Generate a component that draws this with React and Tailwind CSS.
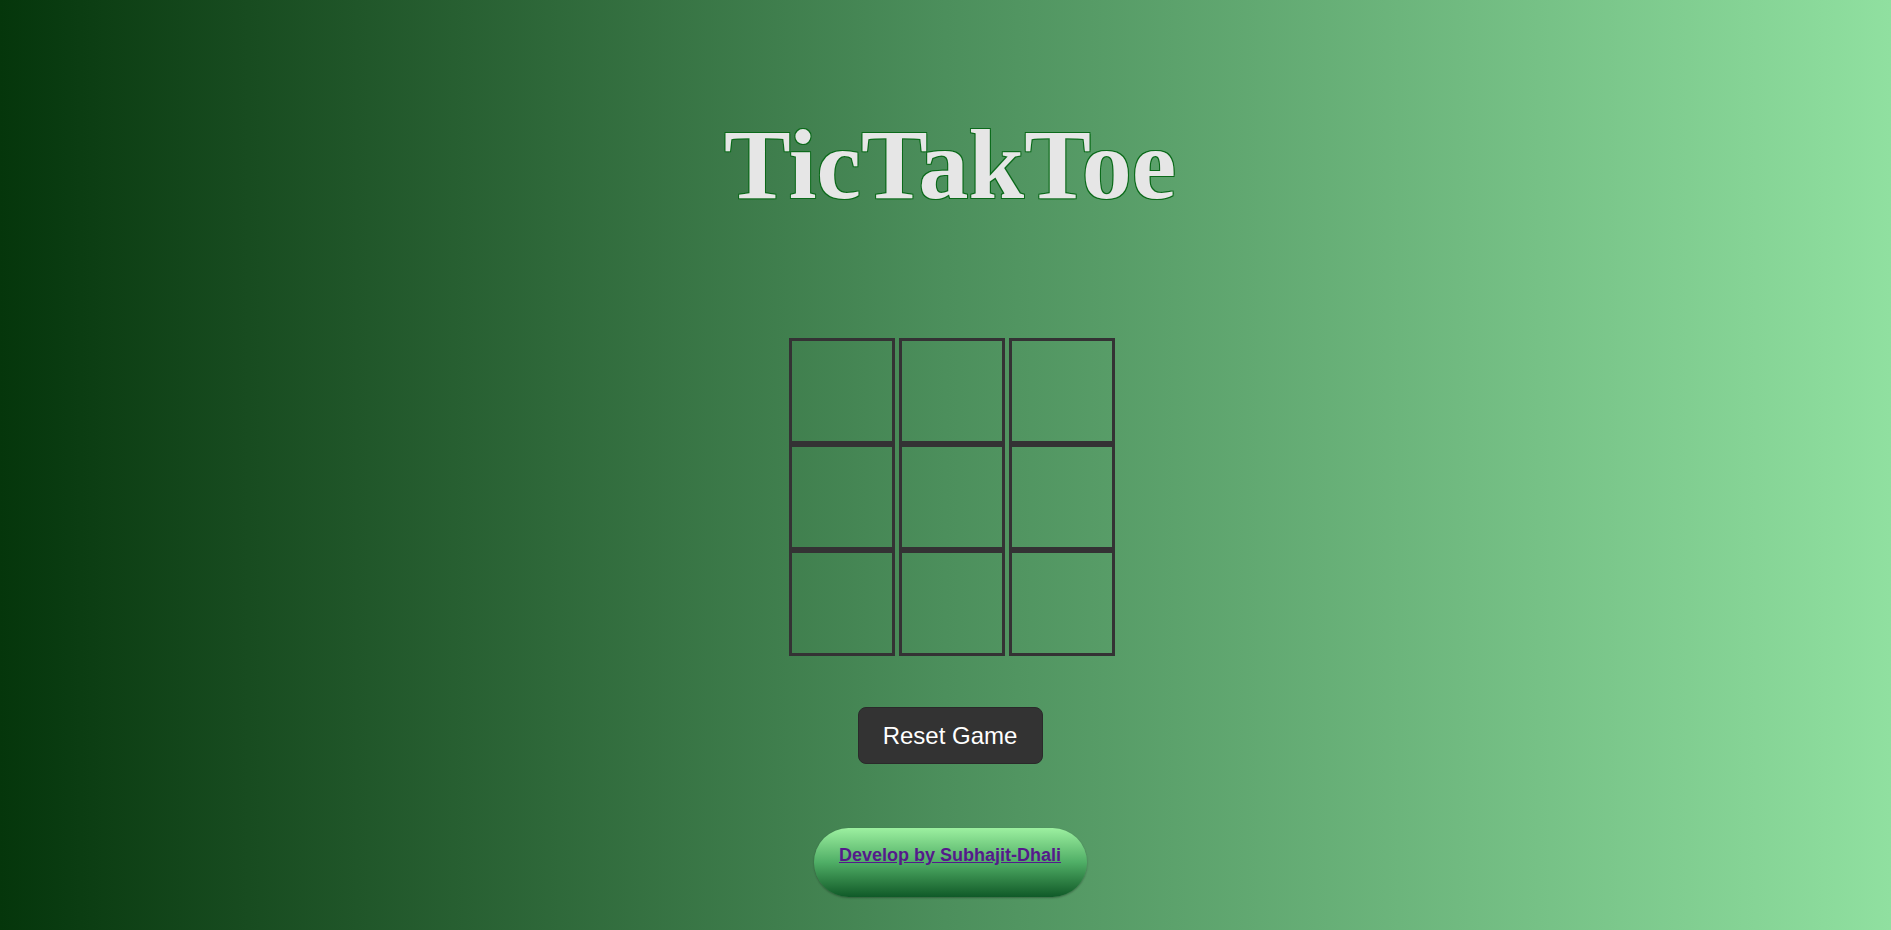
import React, { useState } from 'react';

const App = () => {
    const [board, setBoard] = useState(Array(9).fill(''));
    const [turn, setTurn] = useState('X');

    const handleClick = (i) => {
        if (board[i]) return;
        const next = [...board];
        next[i] = turn;
        setBoard(next);
        setTurn(turn === 'X' ? 'O' : 'X');
    };

    const resetGame = () => {
        setBoard(Array(9).fill(''));
        setTurn('X');
    };

    const rows = [0, 1, 2];

    return (
        <div className="h-[930px] w-full overflow-hidden flex flex-col items-center pl-[9px] bg-gradient-to-r from-[#05360b] via-[#4c8f5c] to-[#90e0a0]">
            <h1 className="mt-[115px] text-[100px] leading-none font-bold text-[#e6e6e6] font-['Liberation_Serif','Times_New_Roman',serif] [text-shadow:1px_1px_0_#0b6a1a,-1px_-1px_0_#0b6a1a,1px_-1px_0_#0b6a1a,-1px_1px_0_#0b6a1a]">
                TicTakToe
            </h1>

            <div className="mt-[123px] ml-[4px] flex flex-col">
                {rows.map((r) => (
                    <div key={r} className="flex gap-[4px]">
                        {rows.map((c) => {
                            const i = r * 3 + c;
                            return (
                                <button
                                    key={c}
                                    type="button"
                                    onClick={() => handleClick(i)}
                                    className="w-[106px] h-[106px] border-[3px] border-[#343234] bg-transparent text-[64px] text-[#333] font-['Liberation_Sans',Arial,sans-serif]"
                                >
                                    {board[i]}
                                </button>
                            );
                        })}
                    </div>
                ))}
            </div>

            <button
                type="button"
                onClick={resetGame}
                className="mt-[51px] w-[185px] h-[57px] rounded-[8px] bg-[#333333] border border-[#2a2a2a] text-white text-[24px] font-['Liberation_Sans',Arial,sans-serif]"
            >
                Reset Game
            </button>

            <div className="mt-[64px] w-[273px] h-[69px] rounded-full bg-gradient-to-b from-[#9cf0a0] via-[#4fae66] to-[#0f5a28] flex justify-center pt-[16px] shadow-[0_1px_2px_rgba(0,0,0,0.3)]">
                <a
                    href="#"
                    className="text-[#551a8b] underline font-bold text-[18px] leading-[22px] font-['Liberation_Sans',Arial,sans-serif]"
                >
                    Develop by Subhajit-Dhali
                </a>
            </div>
        </div>
    );
};

export default App;
